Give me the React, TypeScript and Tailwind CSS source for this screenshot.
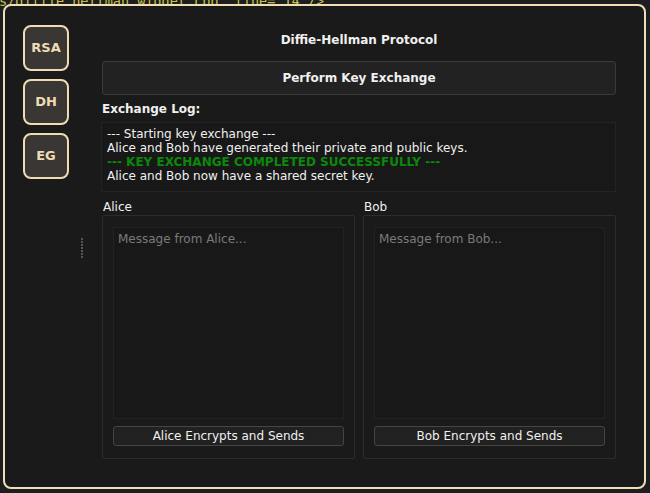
import React from 'react';

const logLines = [
  { text: '--- Starting key exchange ---', ok: false },
  { text: 'Alice and Bob have generated their private and public keys.', ok: false },
  { text: '--- KEY EXCHANGE COMPLETED SUCCESSFULLY ---', ok: true },
  { text: 'Alice and Bob now have a shared secret key.', ok: false },
];

const SideButton: React.FC<{ label: string }> = ({ label }) => (
  <button className="w-[46px] h-[46px] rounded-[8px] border-2 border-[#eddcb4] bg-[#3a3633] text-[#eddcb4] text-[13px] font-bold flex items-center justify-center">
    {label}
  </button>
);

const Party: React.FC<{ name: string }> = ({ name }) => (
  <div className="flex-1 flex flex-col">
    <div className="text-[12px] text-[#f0f0f0] h-[15px] leading-[15px] pl-[1px]">{name}</div>
    <div className="h-[244px] border border-[#2c2c2c] rounded-[2px] px-[10px] pt-[11px] flex flex-col">
      <div className="h-[192px] border border-[#222] bg-[#181818] px-[4px] pt-[3px] text-[12px] leading-[16px] text-[#7a7a7a]">
        Message from {name}...
      </div>
      <button className="mt-[7px] h-[20px] border border-[#454545] rounded-[3px] bg-[#212121] text-[12px] text-[#f0f0f0] leading-[18px]">
        {name} Encrypts and Sends
      </button>
    </div>
  </div>
);

export default function App() {
  return (
    <div className="relative w-[650px] h-[493px] bg-[#1c1e1f] overflow-hidden font-['DejaVu_Sans',sans-serif]">
      <div className="absolute left-[-1px] top-[-9px] font-['DejaVu_Sans_Mono',monospace] text-[13.5px] text-[#c8c24a] whitespace-pre">
        {'s/diffie_hellman_widget.cpp" line="14"/>'}
      </div>
      <div className="absolute left-[3px] top-[4px] w-[643px] h-[485px] border-2 border-[#efdfb7] rounded-[8px] bg-[#1a1a1a] flex">
        <div className="w-[69px] pl-[18px] pt-[19px] flex flex-col gap-[8px]">
          <SideButton label="RSA" />
          <SideButton label="DH" />
          <SideButton label="EG" />
        </div>
        <div className="w-[28px] flex flex-col items-start pl-[7px] pt-[232px]">
          <div className="flex flex-col gap-[1px]">
            {Array.from({ length: 7 }).map((_, i) => (
              <div key={i} className="w-[2px] h-[2px] bg-[#555]" />
            ))}
          </div>
        </div>
        <div className="w-[514px] flex flex-col pt-[25px]">
          <div className="text-center text-[12px] font-bold text-[#f0f0f0] h-[18px] leading-[18px]">
            Diffie-Hellman Protocol
          </div>
          <button className="mt-[12px] h-[34px] border border-[#3a3a3a] rounded-[3px] bg-[#222] text-[12px] font-bold text-[#f0f0f0]">
            Perform Key Exchange
          </button>
          <div className="mt-[6px] text-[12px] font-bold text-[#f0f0f0] h-[16px] leading-[16px]">
            Exchange Log:
          </div>
          <div className="mt-[5px] -ml-[1px] h-[70px] border border-[#232323] bg-[#181818] pl-[5px] pt-[4px]">
            {logLines.map((l, i) => (
              <div
                key={i}
                className={`text-[12px] leading-[14px] ${l.ok ? 'text-[#0a8a0a] font-bold' : 'text-[#f0f0f0]'}`}
              >
                {l.text}
              </div>
            ))}
          </div>
          <div className="mt-[8px] flex gap-[8px]">
            <Party name="Alice" />
            <Party name="Bob" />
          </div>
        </div>
      </div>
    </div>
  );
}
